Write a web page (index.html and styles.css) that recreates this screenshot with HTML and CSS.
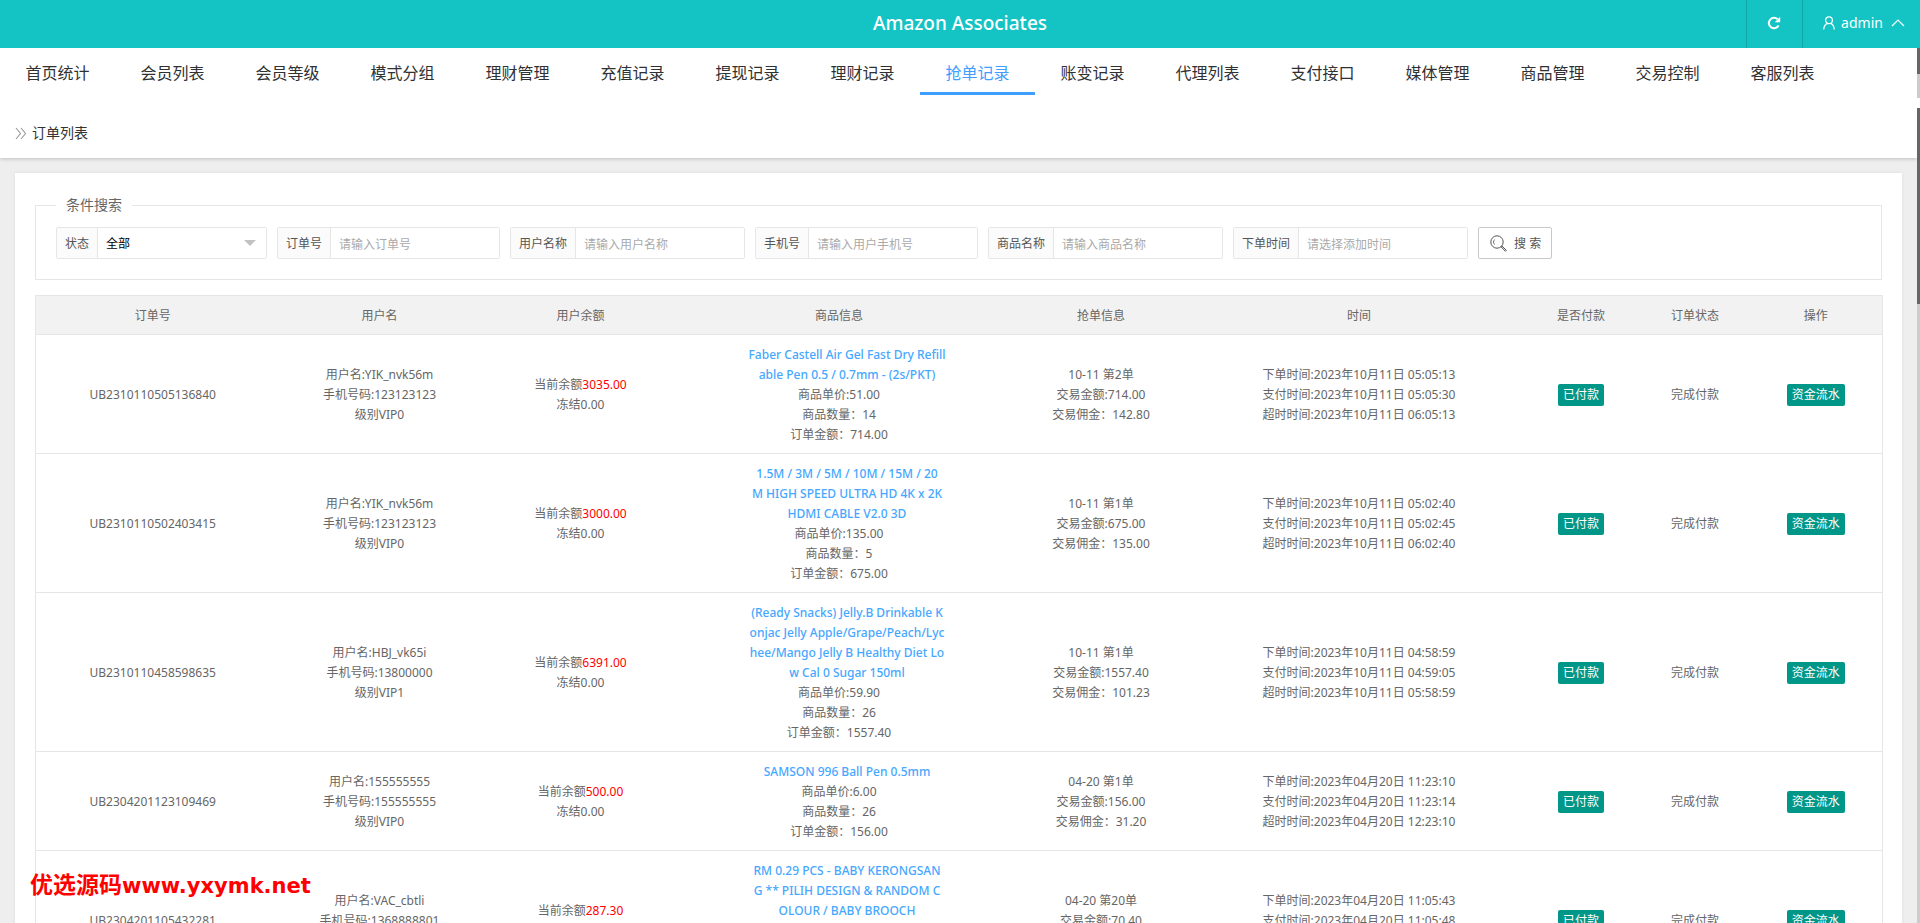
FILE: index.html
```html
<!DOCTYPE html>
<html lang="zh-CN">
<head>
<meta charset="utf-8">
<title>Amazon Associates</title>
<link rel="stylesheet" href="styles.css">
</head>
<body>
<div class="app">
  <header class="topbar">
    <h1 class="brand">Amazon Associates</h1>
    <div class="tools">
      <button class="tool refresh" type="button" aria-label="刷新">
        <svg width="14" height="14" viewBox="0 0 14 14" fill="none" stroke="#fff" stroke-width="2"><path d="M11.6 9.6A5.2 5.2 0 1 1 10.6 3.2"/><path d="M13.2 0.8v5.4H7.8z" fill="#fff" stroke="none"/></svg>
      </button>
      <button class="tool user" type="button">
        <svg width="12" height="14" viewBox="0 0 12 14" fill="none" stroke="#fff" stroke-width="1.2"><circle cx="6" cy="4.3" r="3.4"/><path d="M0.8 13.4C0.9 10.2 2.2 8.4 4.4 7.4M11.2 13.4C11.1 10.2 9.8 8.4 7.6 7.4"/></svg>
        <span>admin</span>
        <svg class="caret" width="14" height="8" viewBox="0 0 14 8" fill="none" stroke="#fff" stroke-width="1.2"><path d="M1 7l6-6 6 6"/></svg>
      </button>
    </div>
  </header>

  <div class="menu">
    <nav class="tabs">
      <a href="#">首页统计</a><a href="#">会员列表</a><a href="#">会员等级</a><a href="#">模式分组</a><a href="#">理财管理</a><a href="#">充值记录</a><a href="#">提现记录</a><a href="#">理财记录</a><a href="#" class="active">抢单记录</a><a href="#">账变记录</a><a href="#">代理列表</a><a href="#">支付接口</a><a href="#">媒体管理</a><a href="#">商品管理</a><a href="#">交易控制</a><a href="#">客服列表</a>
    </nav>
    <div class="rail"><div class="thumb thumb-menu"></div></div>
  </div>

  <div class="frame">
    <main class="content">
      <div class="crumb">
        <svg width="12" height="13" viewBox="0 0 12 13" fill="none" stroke="#999" stroke-width="1.1"><path d="M1 1l4.5 5.5L1 12M6 1l4.5 5.5L6 12"/></svg>
        <span>订单列表</span>
      </div>
      <section class="card">
        <fieldset class="search">
          <legend>条件搜索</legend>
          <form class="fields">
            <div class="field"><label for="status">状态</label><div class="pick"><select id="status"><option>全部</option></select></div></div>
            <div class="field"><label for="order">订单号</label><input id="order" type="text" placeholder="请输入订单号"></div>
            <div class="field"><label for="name">用户名称</label><input id="name" type="text" placeholder="请输入用户名称"></div>
            <div class="field"><label for="phone">手机号</label><input id="phone" type="text" placeholder="请输入用户手机号"></div>
            <div class="field"><label for="goods">商品名称</label><input id="goods" type="text" placeholder="请输入商品名称"></div>
            <div class="field"><label for="time">下单时间</label><input id="time" type="text" placeholder="请选择添加时间"></div>
            <button class="submit" type="button">
              <svg width="17" height="17" viewBox="0 0 17 17" fill="none" stroke="#555" stroke-width="1"><circle cx="7" cy="7" r="6.2"/><path d="M4.5 4.5a3.6 3.6 0 0 0 0 5" stroke-width=".8"/><path d="M11.2 11.9l.8-.8 4.4 4.2-1 1z"/></svg>
              <span>搜 索</span>
            </button>
          </form>
        </fieldset>

        <table class="orders">
          <colgroup><col class="c1"><col class="c2"><col class="c3"><col class="c4"><col class="c5"><col class="c6"><col class="c7"><col class="c8"><col class="c9"></colgroup>
          <thead>
            <tr><th>订单号</th><th>用户名</th><th>用户余额</th><th>商品信息</th><th>抢单信息</th><th>时间</th><th>是否付款</th><th>订单状态</th><th>操作</th></tr>
          </thead>
          <tbody>
            <tr>
              <td>UB2310110505136840</td>
              <td>用户名:YIK_nvk56m<br>手机号码:123123123<br>级别VIP0</td>
              <td>当前余额<span class="money">3035.00</span><br>冻结0.00</td>
              <td><a class="goods" href="#">Faber Castell Air Gel Fast Dry Refill<br>able Pen 0.5 / 0.7mm - (2s/PKT)</a>商品单价:51.00<br>商品数量：14<br>订单金额：714.00</td>
              <td>10-11 第2单<br>交易金额:714.00<br>交易佣金：142.80</td>
              <td>下单时间:2023年10月11日 05:05:13<br>支付时间:2023年10月11日 05:05:30<br>超时时间:2023年10月11日 06:05:13</td>
              <td><button class="btn" type="button">已付款</button></td>
              <td>完成付款</td>
              <td><button class="btn" type="button">资金流水</button></td>
            </tr>
            <tr>
              <td>UB2310110502403415</td>
              <td>用户名:YIK_nvk56m<br>手机号码:123123123<br>级别VIP0</td>
              <td>当前余额<span class="money">3000.00</span><br>冻结0.00</td>
              <td><a class="goods" href="#">1.5M / 3M / 5M / 10M / 15M / 20<br>M HIGH SPEED ULTRA HD 4K x 2K<br>HDMI CABLE V2.0 3D</a>商品单价:135.00<br>商品数量：5<br>订单金额：675.00</td>
              <td>10-11 第1单<br>交易金额:675.00<br>交易佣金：135.00</td>
              <td>下单时间:2023年10月11日 05:02:40<br>支付时间:2023年10月11日 05:02:45<br>超时时间:2023年10月11日 06:02:40</td>
              <td><button class="btn" type="button">已付款</button></td>
              <td>完成付款</td>
              <td><button class="btn" type="button">资金流水</button></td>
            </tr>
            <tr>
              <td>UB2310110458598635</td>
              <td>用户名:HBJ_vk65i<br>手机号码:13800000<br>级别VIP1</td>
              <td>当前余额<span class="money">6391.00</span><br>冻结0.00</td>
              <td><a class="goods" href="#">(Ready Snacks) Jelly.B Drinkable K<br>onjac Jelly Apple/Grape/Peach/Lyc<br>hee/Mango Jelly B Healthy Diet Lo<br>w Cal 0 Sugar 150ml</a>商品单价:59.90<br>商品数量：26<br>订单金额：1557.40</td>
              <td>10-11 第1单<br>交易金额:1557.40<br>交易佣金：101.23</td>
              <td>下单时间:2023年10月11日 04:58:59<br>支付时间:2023年10月11日 04:59:05<br>超时时间:2023年10月11日 05:58:59</td>
              <td><button class="btn" type="button">已付款</button></td>
              <td>完成付款</td>
              <td><button class="btn" type="button">资金流水</button></td>
            </tr>
            <tr>
              <td>UB2304201123109469</td>
              <td>用户名:155555555<br>手机号码:155555555<br>级别VIP0</td>
              <td>当前余额<span class="money">500.00</span><br>冻结0.00</td>
              <td><a class="goods" href="#">SAMSON 996 Ball Pen 0.5mm</a>商品单价:6.00<br>商品数量：26<br>订单金额：156.00</td>
              <td>04-20 第1单<br>交易金额:156.00<br>交易佣金：31.20</td>
              <td>下单时间:2023年04月20日 11:23:10<br>支付时间:2023年04月20日 11:23:14<br>超时时间:2023年04月20日 12:23:10</td>
              <td><button class="btn" type="button">已付款</button></td>
              <td>完成付款</td>
              <td><button class="btn" type="button">资金流水</button></td>
            </tr>
            <tr>
              <td>UB2304201105432281</td>
              <td>用户名:VAC_cbtli<br>手机号码:1368888801<br>级别VIP0</td>
              <td>当前余额<span class="money">287.30</span><br>冻结0.00</td>
              <td><a class="goods" href="#">RM 0.29 PCS - BABY KERONGSAN<br>G ** PILIH DESIGN &amp; RANDOM C<br>OLOUR / BABY BROOCH</a>商品单价:0.29<br>商品数量：243<br>订单金额：70.40</td>
              <td>04-20 第20单<br>交易金额:70.40<br>交易佣金：14.08</td>
              <td>下单时间:2023年04月20日 11:05:43<br>支付时间:2023年04月20日 11:05:48<br>超时时间:2023年04月20日 12:05:43</td>
              <td><button class="btn" type="button">已付款</button></td>
              <td>完成付款</td>
              <td><button class="btn" type="button">资金流水</button></td>
            </tr>
          </tbody>
        </table>
      </section>
    </main>
    <div class="rail"><div class="thumb thumb-frame"></div></div>
  </div>
  <div class="watermark">优选源码<span>www.yxymk.net</span></div>
</div>
</body>
</html>
```
FILE: styles.css
```css
* { box-sizing: border-box; }

body {
  margin: 0;
  background: #fff;
  color: #666;
  font: 12px/20px "Noto Sans", "Noto Sans CJK SC", sans-serif;
}

button, input, select { font: inherit; margin: 0; }
a { text-decoration: none; }
svg { flex: none; display: block; }

.app {
  position: relative;
  display: flex;
  flex-direction: column;
  height: 100vh;
  overflow: hidden;
}

/* Top bar */
.topbar {
  flex: none;
  display: grid;
  grid-template-columns: 1fr auto 1fr;
  height: 48px;
  background: #14c4c5;
  color: #fff;
}
.brand {
  grid-column: 2;
  margin: 0;
  font-size: 19px;
  font-weight: 500;
  line-height: 46px;
}
.tools { display: flex; justify-content: flex-end; }
.tool {
  display: flex;
  align-items: center;
  justify-content: center;
  gap: 6px;
  padding: 0 0 2px;
  border: 0;
  border-left: 1px solid #10a5a6;
  background: none;
  color: #fff;
  font-size: 14px;
}
.refresh { width: 56px; padding-right: 2px; }
.user { width: 118px; padding-left: 5px; }
.user span { margin-right: 2px; }

/* Menu */
.menu { flex: none; display: flex; height: 50px; margin-bottom: 10px; }
.tabs { flex: 1; display: flex; }
.tabs a {
  min-width: 115px;
  height: 47px;
  border-bottom: 3px solid transparent;
  color: #303133;
  font-size: 16px;
  line-height: 50px;
  text-align: center;
}
.tabs .active { border-color: #409eff; color: #409eff; }

.rail { flex: none; width: 3px; background: #ccc; }
.thumb { background: #666; }
.thumb-menu { height: 26px; }
.thumb-frame { height: 196px; }

/* Page frame */
.frame { flex: 1; display: flex; min-height: 0; }
.content { flex: 1; min-width: 0; overflow: hidden; background: #eee; }
.crumb {
  display: flex;
  align-items: center;
  gap: 5px;
  height: 50px;
  padding-left: 15px;
  background: #fff;
  box-shadow: 0 1px 4px rgba(0, 0, 0, .2);
  color: #333;
  font-size: 14px;
}
.card {
  margin: 15px;
  padding: 22px 20px 20px;
  background: #fff;
  box-shadow: 0 0 3px rgba(0, 0, 0, .08);
}

/* Search */
.search {
  margin: 0 0 15px;
  padding: 12px 20px 20px;
  border: 1px solid #e6e6e6;
}
.search legend { padding: 0 10px; font-size: 14px; }
.fields { display: flex; flex-wrap: wrap; gap: 10px; }
.field {
  display: flex;
  height: 32px;
  border: 1px solid #e6e6e6;
  border-radius: 2px;
}
.field label {
  padding: 1px 8px 0;
  border-right: 1px solid #e6e6e6;
  background: #fbfbfb;
  color: #555;
  line-height: 29px;
}
.field input, .field select {
  width: 168px;
  height: 30px;
  padding: 2px 8px 0;
  border: 0;
  outline: 0;
  background: #fff;
  color: #000;
  appearance: none;
}
.field input::placeholder { color: #aaa; opacity: 1; }
.pick { position: relative; }
.pick::after {
  content: "";
  position: absolute;
  right: 10px;
  top: 12px;
  border: 6px solid transparent;
  border-top-color: #c2c2c2;
  border-bottom: 0;
  pointer-events: none;
}
.submit {
  display: flex;
  align-items: center;
  gap: 7px;
  height: 32px;
  padding: 1px 10px 0 11px;
  border: 1px solid #c9c9c9;
  border-radius: 2px;
  background: #fff;
  color: #555;
}

/* Orders */
.orders {
  width: 100%;
  table-layout: fixed;
  border-collapse: collapse;
  border: 1px solid #e6e6e6;
  text-align: center;
}
.c1 { width: 235px; }
.c2 { width: 219px; }
.c3 { width: 183px; }
.c4 { width: 334px; }
.c5 { width: 190px; }
.c6 { width: 326px; }
.c7 { width: 118px; }
.c8 { width: 110px; }
.c9 { width: 132px; }
.orders th, .orders td { padding: 10px 1px 8px 0; border-bottom: 1px solid #e6e6e6; }
.orders th { background: #f2f2f2; font-weight: 400; }
.money { color: #f00; }
.goods {
  display: block;
  margin-left: 16px;
  color: #45a7ff;
  font-weight: 500;
  white-space: nowrap;
}
.btn {
  height: 22px;
  padding: 0 5px;
  border: 0;
  border-radius: 2px;
  background: #009688;
  color: #fff;
  vertical-align: top;
}

.watermark {
  position: absolute;
  left: 30px;
  bottom: 22px;
  color: #f00;
  font: 700 23px/30px "Noto Sans CJK SC", sans-serif;
}
.watermark span { font-family: "DejaVu Sans", sans-serif; font-size: 21px; }
```
